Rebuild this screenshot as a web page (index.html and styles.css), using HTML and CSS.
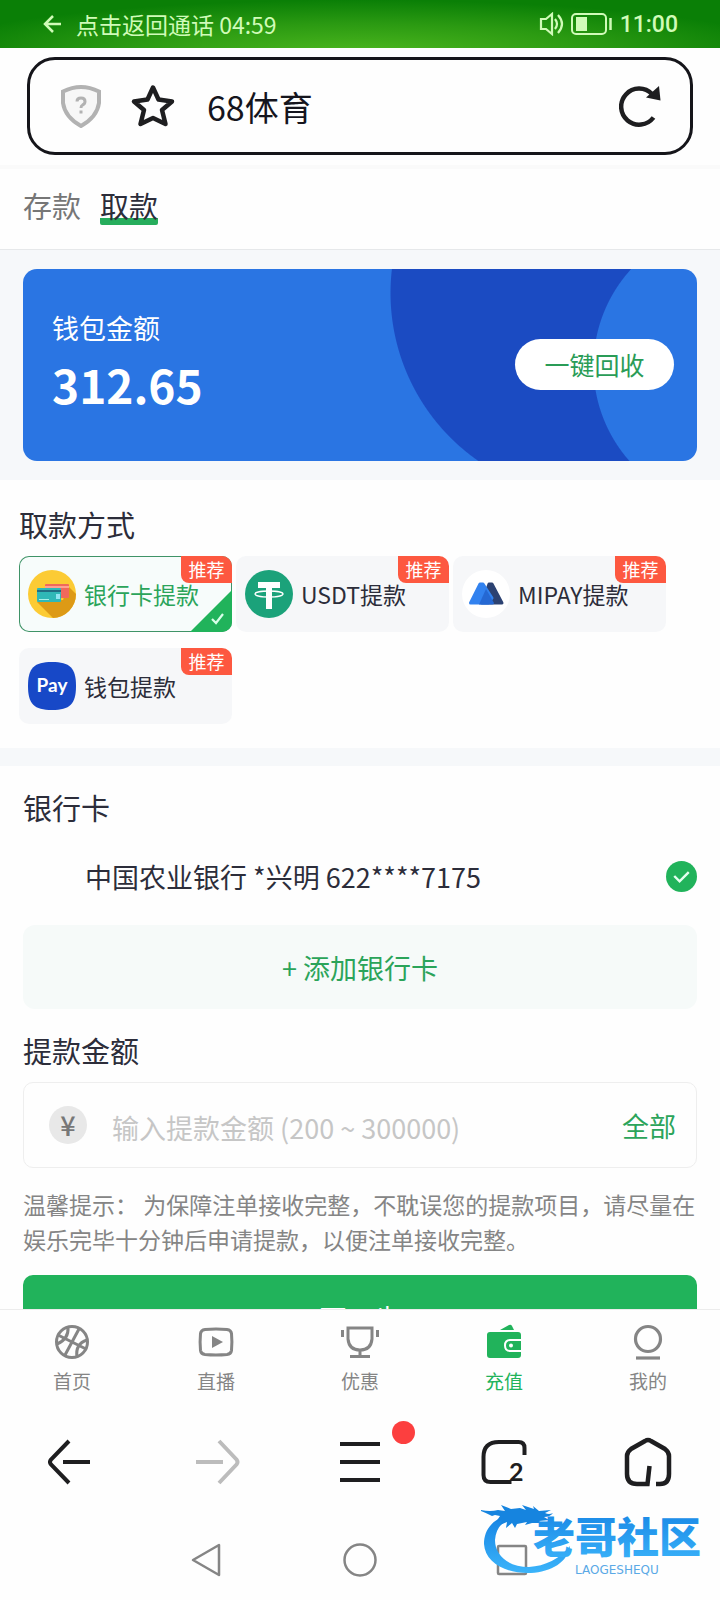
FILE: index.html
```html
<!DOCTYPE html>
<html lang="zh-CN">
<head>
<meta charset="UTF-8" />
<meta name="viewport" content="width=device-width, initial-scale=1" />
<title>68体育</title>
<link rel="stylesheet" href="styles.css">
</head>
<body>
  <div class="status-bar">
    <a class="call-back" href="#">
      <svg width="20" height="20" viewBox="0 0 20 20" fill="none" stroke="currentColor" stroke-width="2.5"><path d="M10 2L2 10l8 8M2 10h16"/></svg>
      <span>点击返回通话 04:59</span>
    </a>
    <div class="status-right">
      <svg width="25" height="24" viewBox="0 0 25 24" fill="none" stroke="currentColor" stroke-width="2.2"><path d="M2 7h5l6-5v20l-6-5H2z"/><path d="M16 7q4 5 0 10M19 3q8 9 0 18"/></svg>
      <svg width="42" height="22" viewBox="0 0 42 22" fill="none" stroke="currentColor" stroke-width="2"><rect x="1" y="1" width="34" height="20" rx="4"/><rect x="5" y="4" width="11" height="14" fill="currentColor" stroke="none"/><path d="M39.5 5v12" stroke-width="2.5"/></svg>
      <span class="clock">11:00</span>
    </div>
  </div>

  <header class="browser-head">
    <div class="url-box">
      <svg class="shield" width="42" height="44" viewBox="0 0 42 44" fill="#f7f7f7" stroke="#b2b2b2"><path stroke-width="4" d="M21 3Q30 3 39 7.5V19Q37 33 21 42Q5 33 3 19V7.5Q12 3 21 3Z"/><path fill="none" stroke-width="3" d="M17 17.5q0-3.5 4-3.5t4 3.5q0 2.5-2.5 3.5-1.5.7-1.5 3M21 26.5v3"/></svg>
      <svg class="star" width="46" height="44" viewBox="0 0 46 44" fill="none" stroke="#1e1e20" stroke-width="4.5" stroke-linejoin="round"><path d="M23 3.5L28.5 15.5L42 17.5L32 26L35.5 40L23 34L10.5 40L14 26L4 17.5L17.5 15.5Z"/></svg>
      <span class="page-title">68体育</span>
      <button class="reload" aria-label="刷新">
        <svg width="42" height="42" viewBox="0 0 42 42" fill="none" stroke="#1e1e20" stroke-width="4.5"><path d="M34.5 32.5A18 18 0 1 1 33 9"/><path fill="#1e1e20" stroke="none" d="M40 1L41.5 15.5L27 12.5Z"/></svg>
      </button>
    </div>
  </header>

  <main class="page">
    <nav class="tabs">
      <a href="#">存款</a>
      <a href="#" class="active">取款</a>
    </nav>

    <div class="wallet-wrap">
      <div class="wallet">
        <div>
          <div class="wallet-label">钱包金额</div>
          <div class="wallet-amount">312.65</div>
        </div>
        <button class="recycle">一键回收</button>
      </div>
    </div>

    <section class="methods-section">
      <h2>取款方式</h2>
      <div class="methods">
        <label class="method selected">
          <input type="radio" name="method" checked>
          <svg width="48" height="48" viewBox="0 0 48 48"><circle cx="24" cy="24" r="24" fill="#fccb34"/><path fill="#dd9a16" d="M9 32L25 48A24 24 0 0 0 48 24L40 16L35 30Z"/><rect x="17" y="14" width="24" height="14" rx="1" fill="#f0695c"/><path stroke="#ffa091" stroke-width="2" d="M17 17h24"/><rect x="9" y="18" width="24" height="14" rx="1" fill="#2fb8b7"/><path stroke="#216e83" stroke-width="2" d="M9 21h24"/><path stroke="#a6f0e8" stroke-width="1" d="M11 29.5h10"/><rect x="28" y="24" width="4" height="5" fill="#91e5f2"/></svg>
          <span>银行卡提款</span>
          <em class="badge">推荐</em>
          <svg class="corner" width="42" height="42" viewBox="0 0 42 42"><path fill="#21b35b" d="M42 0V42H0Z"/><path fill="none" stroke="#d8ffe9" stroke-width="2.2" d="M22 29l4 4 7-9"/></svg>
        </label>
        <label class="method">
          <input type="radio" name="method">
          <svg width="48" height="48" viewBox="0 0 48 48"><circle cx="24" cy="24" r="24" fill="#1ba27a"/><path fill="#fff" d="M13 12h22v6h-8v21h-6V18h-8z"/><ellipse cx="24" cy="24" rx="14" ry="3" fill="none" stroke="#fff" stroke-width="1.3"/></svg>
          <span>USDT提款</span>
          <em class="badge">推荐</em>
        </label>
        <label class="method">
          <input type="radio" name="method">
          <svg width="48" height="48" viewBox="0 0 48 48"><circle cx="24" cy="24" r="24" fill="#fff"/><path fill="#2c4272" stroke="#2c4272" stroke-width="3" stroke-linejoin="round" d="M27 14h3L40 33H20z"/><path fill="#3282ef" stroke="#3282ef" stroke-width="3" stroke-linejoin="round" d="M18 14h3L30 28 26 33H8.5z"/><path fill="#2568d3" d="M24 19l8 14q0 1.5-2 1.5H17z"/></svg>
          <span>MIPAY提款</span>
          <em class="badge">推荐</em>
        </label>
        <label class="method">
          <input type="radio" name="method">
          <svg width="48" height="48" viewBox="0 0 48 48"><path fill="#1748c7" d="M24 0C42 0 48 6 48 24S42 48 24 48 0 42 0 24 6 0 24 0Z"/><text class="pay-text" x="24" y="30" text-anchor="middle">Pay</text></svg>
          <span>钱包提款</span>
          <em class="badge">推荐</em>
        </label>
      </div>
    </section>

    <section class="form-section">
      <h2>银行卡</h2>
      <label class="bank">
        <input type="radio" name="bank" checked>
        <span>中国农业银行 *兴明 622****7175</span>
        <svg width="31" height="31" viewBox="0 0 32 32"><circle cx="16" cy="16" r="16" fill="#21b35b"/><path fill="none" stroke="#e4fff0" stroke-width="2.5" d="M8.5 15.5l5.5 5.5 9.5-9.5"/></svg>
      </label>
      <button class="add-card">+ 添加银行卡</button>

      <h2 class="amount-title"><label for="amount">提款金额</label></h2>
      <div class="amount-box">
        <span class="yuan">¥</span>
        <input type="text" id="amount" inputmode="decimal" placeholder="输入提款金额 (200 ~ 300000)">
        <button class="all">全部</button>
      </div>
      <p class="hint">温馨提示： 为保障注单接收完整，不耽误您的提款项目，请尽量在娱乐完毕十分钟后申请提款，以便注单接收完整。</p>
      <button class="next">下一步</button>
    </section>
  </main>

  <nav class="site-nav">
    <a href="#">
      <svg width="36" height="36" viewBox="0 0 36 36" fill="none" stroke="currentColor" stroke-width="3"><circle cx="18" cy="18" r="15.5"/><path d="M4 11L32 25M25.5 4L10.5 32M14 3q1 12-11 17M33 16q-12 4-10 17"/></svg>
      <span>首页</span>
    </a>
    <a href="#">
      <svg width="36" height="36" viewBox="0 0 36 36" fill="none" stroke="currentColor" stroke-width="3"><path d="M7 5.5q11-1 22 0 4 .5 4.5 4 .8 8.5 0 17-.5 3.5-4.5 4-11 1-22 0-4-.5-4.500-4-.8-8.500 0-17Q3 6 7 5.5Z"/><path fill="currentColor" stroke="none" d="M14 12l11 6-11 6z"/></svg>
      <span>直播</span>
    </a>
    <a href="#">
      <svg width="40" height="36" viewBox="0 0 40 36" fill="none" stroke="currentColor" stroke-width="3"><path d="M8 4h24v11q-1 11-12 11T8 15ZM20 26v6M10 32.5h20M2.5 6v7M37.500 6v7"/></svg>
      <span>优惠</span>
    </a>
    <a href="#" class="active">
      <svg width="36" height="36" viewBox="0 0 36 36"><path fill="currentColor" d="M14 6l9-5q2-1 3 1l2 4zM4 8h28q3 0 3 3v20q0 3-3 3H4q-3 0-3-3V11q0-3 3-3z"/><path fill="none" stroke="#fff" stroke-width="2" d="M35 16H24q-5 0-5 5.5t5 5.5h11"/><circle cx="25" cy="21.5" r="2" fill="#fff"/></svg>
      <span>充值</span>
    </a>
    <a href="#">
      <svg width="36" height="36" viewBox="0 0 36 36" fill="none" stroke="currentColor" stroke-width="3.2"><circle cx="18" cy="15" r="12.5"/><path d="M6 34h24"/></svg>
      <span>我的</span>
    </a>
  </nav>

  <div class="browser-bar">
    <button aria-label="后退">
      <svg width="48" height="48" viewBox="0 0 48 48" fill="none" stroke="#1e1e20" stroke-width="4"><path d="M21 3L3 21.5q-2 2.5 0 5L21 45M15 24h27"/></svg>
    </button>
    <button aria-label="前进" disabled>
      <svg width="48" height="48" viewBox="0 0 48 48" fill="none" stroke="#bcbcbc" stroke-width="4"><path d="M27 3L44.5 21.5q2 2.5 0 5L27 45M4 24h27"/></svg>
    </button>
    <button class="menu" aria-label="菜单">
      <svg width="48" height="48" viewBox="0 0 48 48" fill="none" stroke="#1e1e20" stroke-width="4"><path d="M4 6h40M4 24h40M4 42h40"/></svg>
      <i class="dot"></i>
    </button>
    <button aria-label="窗口">
      <svg width="48" height="48" viewBox="0 0 48 48" fill="none" stroke="#1e1e20" stroke-width="4"><path d="M44.5 17V10q0-6-6-6H19Q3.5 4 3.5 19V37q0 7 7 7h21"/><text class="tab-count" x="29" y="43">2</text></svg>
    </button>
    <button aria-label="主页">
      <svg width="48" height="50" viewBox="0 0 48 50" fill="none" stroke="#1e1e20" stroke-width="4.5"><path d="M25.5 29l-2 18H13q-10 0-10-10V19q0-4 4-7l14-8q3-2 6 0l14 8q4 3 4 7v18q0 10-9 10h-4"/></svg>
    </button>
  </div>

  <div class="system-bar">
    <button aria-label="返回">
      <svg width="36" height="36" viewBox="0 0 36 36" fill="none" stroke="#858585" stroke-width="2.5" stroke-linejoin="round"><path d="M5 18L31 3v30z"/></svg>
    </button>
    <button aria-label="桌面">
      <svg width="36" height="36" viewBox="0 0 36 36" fill="none" stroke="#858585" stroke-width="2.5"><circle cx="18" cy="18" r="15.5"/></svg>
    </button>
    <button aria-label="最近任务">
      <svg width="36" height="36" viewBox="0 0 36 36" fill="none" stroke="#858585" stroke-width="2.5"><rect x="2" y="4" width="28" height="28" rx="1"/></svg>
    </button>
    <div class="watermark">
      <svg width="226" height="80" viewBox="0 0 226 80">
        <defs>
          <linearGradient id="blue" x1="0" y1="0" x2="0" y2="1"><stop offset="0" stop-color="#1582e3"/><stop offset="1" stop-color="#3bb4fa"/></linearGradient>
        </defs>
        <path fill="url(#blue)" d="M30 14C10 19 3 31 3 44C4 62 24 74 50 73C70 72 87 62 89 46C79 59 64 66 48 67C28 67 14 56 14 40C15 28 21 20 36 17Z"/>
        <path fill="#1684df" d="M0 10q9 2 17 0l7 1-4-6 10 4 9-1 6 2-4-5 12 4-1-3 6 5 12-1-6 3q4 2 8 0-3 4-9 4l5 3-10 1 3 2h-10l-7 2 2-3-10 2-2 4-3-5-6 5 1-6-7 3 2-5-6 2 4-6-5-1-3 1q-8-4-14-6z"/>
        <text class="mark-name" x="52" y="53" fill="url(#blue)">老哥社区</text>
        <text class="mark-sub" x="94" y="74">LAOGESHEQU</text>
      </svg>
    </div>
  </div>
</body>
</html>
```
FILE: styles.css
```css
* {
  box-sizing: border-box;
}
body {
  margin: 0;
  height: 100vh;
  display: flex;
  flex-direction: column;
  font-family: "Noto Sans CJK SC", "Noto Sans", sans-serif;
  color: #2c2d3a;
  background: #fefefe;
}
a {
  color: inherit;
  text-decoration: none;
}
button {
  padding: 0;
  border: none;
  background: none;
  font-family: inherit;
  color: inherit;
}
svg {
  display: block;
  flex-shrink: 0;
}

.status-bar {
  display: flex;
  align-items: center;
  justify-content: space-between;
  height: 48px;
  flex-shrink: 0;
  padding: 0 42px 0 43px;
  color: #d0fbb8;
  font-size: 23px;
  background: radial-gradient(ellipse 60% 110% at 50% 110%, #4cb71e 0%, #2b9a12 55%, #0a7f06 100%);
}
.call-back,
.status-right {
  display: flex;
  align-items: center;
}
.call-back {
  gap: 13px;
}
.status-right {
  gap: 7px;
}
.clock {
  font-family: Roboto, sans-serif;
  font-size: 23px;
  font-weight: 500;
}

.browser-head {
  flex-shrink: 0;
  padding: 9px 27px 10px;
}
.url-box {
  display: flex;
  align-items: center;
  height: 98px;
  padding: 0 29px 0 30px;
  border: 3px solid #15151a;
  border-radius: 28px;
}
.star {
  margin-left: 28px;
}
.page-title {
  flex: 1;
  margin-left: 31px;
  font-size: 34px;
  color: #15151d;
}

.page {
  flex: 1;
  min-height: 0;
  overflow: hidden;
}
.tabs {
  display: flex;
  align-items: flex-start;
  gap: 19px;
  height: 85px;
  padding: 16px 23px 0;
  border-top: 4px solid #fafafa;
  border-bottom: 1px solid #e6e8ea;
  font-size: 29px;
  line-height: 40px;
  color: #767676;
}
.tabs .active {
  color: #2c2d3a;
  border-radius: 2px;
  background: linear-gradient(#26ad5c, #26ad5c) bottom / 100% 7px no-repeat;
}

.wallet-wrap {
  padding: 19px 23px;
  background: #f6f8fa;
}
.wallet {
  display: flex;
  align-items: center;
  justify-content: space-between;
  height: 192px;
  padding: 0 23px 2px 29px;
  border-radius: 14px;
  color: #fff;
  background:
    radial-gradient(circle at calc(100% + 40px) 97px, #2a75e3 143px, transparent 144px),
    radial-gradient(circle at calc(100% - 102px) 24px, #1b4bc2 204px, transparent 205px),
    #2a75e3;
}
.wallet-label {
  font-size: 27px;
  line-height: 40px;
}
.wallet-amount {
  font-size: 46px;
  font-weight: 700;
  line-height: 72px;
}
.recycle {
  width: 159px;
  height: 51px;
  border-radius: 26px;
  background: #fff;
  color: #2a9c57;
  font-size: 25px;
}

h2 {
  margin: 0;
  font-size: 29px;
  font-weight: 400;
  line-height: 40px;
}
.methods-section {
  padding: 24px 54px 24px 19px;
  border-bottom: 18px solid #f6f8fa;
}
.methods {
  display: grid;
  grid-template-columns: repeat(3, 1fr);
  gap: 16px 4px;
  margin-top: 12px;
}
.method {
  position: relative;
  display: flex;
  align-items: center;
  gap: 8px;
  height: 76px;
  padding-left: 9px;
  border-radius: 10px;
  overflow: hidden;
  background: #f6f7f9;
  font-size: 23px;
  white-space: nowrap;
}
.method.selected {
  color: #2ba45a;
  background: #f7fcfb;
  box-shadow: inset 0 0 0 1px #3f9367;
}
.method input,
.bank input {
  position: absolute;
  opacity: 0;
}
.badge {
  position: absolute;
  top: 0;
  right: 0;
  width: 51px;
  height: 27px;
  border-radius: 0 0 0 8px;
  background: #fd5840;
  color: #fff;
  font-size: 18px;
  font-style: normal;
  line-height: 27px;
  text-align: center;
}
.corner {
  position: absolute;
  right: 0;
  bottom: 0;
}
.pay-text {
  font-family: Lato, sans-serif;
  font-size: 19px;
  font-weight: 700;
  fill: #fff;
}

.form-section {
  padding: 21px 23px;
}
.bank {
  position: relative;
  display: flex;
  align-items: center;
  justify-content: space-between;
  height: 98px;
  padding-left: 62px;
  font-size: 27px;
}
.add-card {
  width: 100%;
  height: 84px;
  border-radius: 12px;
  background: #f6faf9;
  color: #2ba45a;
  font-size: 27px;
}
.amount-title {
  margin: 21px 0 12px;
}
.amount-box {
  display: flex;
  align-items: center;
  height: 86px;
  padding: 0 20px 0 25px;
  border: 1px solid #eee;
  border-radius: 10px;
}
.yuan {
  width: 38px;
  height: 38px;
  border-radius: 50%;
  background: #e8e8e8;
  color: #777;
  font-size: 27px;
  font-weight: 500;
  line-height: 38px;
  text-align: center;
}
.amount-box input {
  flex: 1;
  min-width: 0;
  padding: 4px 0 0;
  margin-left: 25px;
  border: none;
  outline: none;
  background: none;
  font-family: inherit;
  font-size: 27px;
  color: #2c2d3a;
}
.amount-box input::placeholder {
  color: #c6c6c6;
}
.all {
  color: #2ba45a;
  font-size: 27px;
}
.hint {
  margin: 19px 0 18px;
  color: #858585;
  font-size: 23px;
  line-height: 35px;
}
.next {
  display: block;
  width: 100%;
  height: 84px;
  border-radius: 10px;
  background: #21b35b;
  color: #fff;
  font-size: 27px;
}

.site-nav {
  display: flex;
  flex-shrink: 0;
  height: 101px;
  padding-top: 14px;
  border-top: 1px solid #ececec;
  color: #858585;
  font-size: 19px;
  line-height: 28px;
}
.site-nav a {
  flex: 1;
  display: flex;
  flex-direction: column;
  align-items: center;
  gap: 7px;
}
.site-nav .active {
  color: #21b35b;
}

.browser-bar {
  display: flex;
  flex-shrink: 0;
  height: 104px;
}
.browser-bar button {
  position: relative;
  flex: 1;
  display: flex;
  align-items: center;
  justify-content: center;
}
.dot {
  position: absolute;
  top: 11px;
  left: calc(50% + 32px);
  width: 23px;
  height: 23px;
  border-radius: 50%;
  background: #fc3f3f;
}
.tab-count {
  font-family: Lato, sans-serif;
  font-size: 25px;
  font-weight: 700;
  fill: #1e1e20;
  stroke: none;
}

.system-bar {
  position: relative;
  display: flex;
  align-items: center;
  justify-content: center;
  gap: 118px;
  flex-shrink: 0;
  height: 86px;
  padding-top: 6px;
}
.watermark {
  position: absolute;
  right: 13px;
  top: -14px;
  pointer-events: none;
}
.mark-name {
  font-size: 42px;
  font-weight: 900;
}
.mark-sub {
  font-family: "DejaVu Sans", sans-serif;
  font-size: 12px;
  fill: #5aa9e6;
}
```
